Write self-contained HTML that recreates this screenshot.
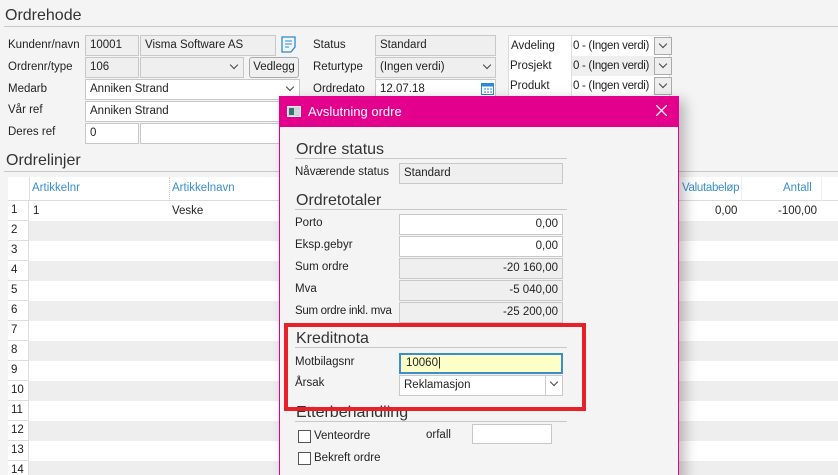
<!DOCTYPE html>
<html><head><meta charset="utf-8"><style>
*{box-sizing:border-box;margin:0;padding:0}
html,body{width:838px;height:475px;overflow:hidden}
body{background:#f4f4f4;font-family:"Liberation Sans",sans-serif;font-size:11.5px;color:#222;position:relative}
.a{position:absolute}
.h{font-size:16px;color:#333}
.ln{height:1px;background:#c8c8c8}
.f{position:absolute;border:1px solid #c8c8c8;background:#fff;padding:3px 4px;height:21px;white-space:nowrap;overflow:hidden;line-height:13px}
.g{background:#efefef}
.r{text-align:right}
.lab{position:absolute;white-space:nowrap}
.dd{position:absolute;width:18px;height:18px;border:1px solid #aaa;background:#eee}
.chev{position:absolute;width:6px;height:6px;border-right:1px solid #444;border-bottom:1px solid #444;transform:rotate(45deg)}
.row{position:absolute;left:8px;width:830px;height:20px}
.num{position:absolute;left:0;width:21px;height:20px;border-right:1px solid #ddd;border-bottom:1px solid #ddd;background:#fff;padding:3px 3px}
</style></head><body>
<div class="a h" style="left:5px;top:7px">Ordrehode</div>
<div class="a ln" style="left:4px;top:26px;width:834px"></div>

<div class="lab" style="left:8px;top:39px">Kundenr/navn</div>
<div class="f g" style="left:85px;top:35px;width:54px">10001</div>
<div class="f g" style="left:140px;top:35px;width:136px">Visma Software AS</div>
<svg class="a" style="left:281px;top:36px" width="16" height="17"><path d="M1 1h13v10l-4 5H1z" fill="none" stroke="#2a8ad4" stroke-width="1.3"/><path d="M4 5h7M4 8h7M4 11h4" stroke="#2a8ad4"/></svg>
<div class="lab" style="left:8px;top:61px">Ordrenr/type</div>
<div class="f g" style="left:85px;top:57px;width:54px">106</div>
<div class="f g" style="left:140px;top:57px;width:104px"></div>
<div class="chev" style="left:231px;top:62px"></div>
<div class="f g" style="left:249px;top:57px;width:50px;border-radius:3px;background:#f0f0f0;border-color:#aaa;text-align:center;padding:3px 1px">Vedlegg</div>
<div class="lab" style="left:8px;top:83px">Medarb</div>
<div class="f" style="left:85px;top:79px;width:215px">Anniken Strand</div>
<div class="chev" style="left:287px;top:84px"></div>
<div class="lab" style="left:8px;top:104px">Vår ref</div>
<div class="f" style="left:85px;top:101px;width:200px">Anniken Strand</div>
<div class="lab" style="left:8px;top:126px">Deres ref</div>
<div class="f" style="left:85px;top:123px;width:54px">0</div>
<div class="f" style="left:140px;top:123px;width:145px"></div>

<div class="lab" style="left:313px;top:39px">Status</div>
<div class="f g" style="left:375px;top:35px;width:121px">Standard</div>
<div class="lab" style="left:313px;top:61px">Returtype</div>
<div class="f g" style="left:375px;top:57px;width:121px">(Ingen verdi)</div>
<div class="chev" style="left:484px;top:62px"></div>
<div class="lab" style="left:313px;top:83px">Ordredato</div>
<div class="f" style="left:375px;top:79px;width:121px">12.07.18</div>
<svg class="a" style="left:481px;top:82px" width="13" height="13"><rect x="0.5" y="1.5" width="12" height="11" fill="#fff" stroke="#2a8ad4"/><rect x="0.5" y="1.5" width="12" height="3" fill="#2a8ad4"/><path d="M3 7h2M6 7h2M9 7h2M3 10h2M6 10h2M9 10h2" stroke="#2a8ad4"/></svg>

<div class="a" style="left:508px;top:35px;width:162px;height:62px;background:#fff;border:1px solid #ddd"></div>
<div class="lab" style="left:511px;top:40px">Avdeling</div>
<div class="lab" style="left:510px;top:60px">Prosjekt</div>
<div class="lab" style="left:510px;top:80px">Produkt</div>
<div class="a" style="left:571px;top:35px;width:1px;height:62px;background:#ddd"></div>
<div class="a" style="left:572px;top:56px;width:82px;height:20px;background:#efefef"></div>
<div class="lab" style="left:573px;top:40px;letter-spacing:-0.3px">0 - (Ingen verdi)</div>
<div class="lab" style="left:573px;top:60px;letter-spacing:-0.3px">0 - (Ingen verdi)</div>
<div class="lab" style="left:573px;top:80px;letter-spacing:-0.3px">0 - (Ingen verdi)</div>
<div class="dd" style="left:654px;top:37px"></div><div class="chev" style="left:660px;top:41px"></div>
<div class="dd" style="left:654px;top:57px"></div><div class="chev" style="left:660px;top:61px"></div>
<div class="dd" style="left:654px;top:77px"></div><div class="chev" style="left:660px;top:81px"></div>

<div class="a h" style="left:6px;top:152px">Ordrelinjer</div>
<div class="a ln" style="left:4px;top:171px;width:834px"></div>

<div class="a" style="left:8px;top:177px;width:830px;height:24px;background:#fff;border-bottom:1px solid #ddd"></div>
<div class="a" style="left:29px;top:177px;width:1px;height:298px;background:#ddd"></div>
<div class="a" style="left:169px;top:177px;width:0;height:298px;border-left:1px dotted #ccc"></div>
<div class="lab" style="left:32px;top:182px;color:#3a8fcf">Artikkelnr</div>
<div class="lab" style="left:172px;top:182px;color:#3a8fcf">Artikkelnavn</div>
<div class="lab" style="left:682px;top:182px;color:#3a8fcf;letter-spacing:-0.3px">Valutabeløp</div>
<div class="lab" style="left:783px;top:182px;color:#3a8fcf">Antall</div>
<div class="a" style="left:741px;top:177px;width:1px;height:298px;background:#eee"></div>
<div class="a" style="left:821px;top:177px;width:1px;height:298px;background:#eee"></div>

<div class="row" style="top:201px;background:#fff"><div class="num">1</div></div>
<div class="lab" style="left:33px;top:205px">1</div>
<div class="lab" style="left:172px;top:205px">Veske</div>
<div class="lab" style="left:715px;top:205px">0,00</div>
<div class="lab" style="left:778px;top:205px">-100,00</div>
<div class="row" style="top:221px;background:#eee"><div class="num">2</div></div>
<div class="row" style="top:241px;background:#fff"><div class="num">3</div></div>
<div class="row" style="top:261px;background:#eee"><div class="num">4</div></div>
<div class="row" style="top:281px;background:#fff"><div class="num">5</div></div>
<div class="row" style="top:301px;background:#eee"><div class="num">6</div></div>
<div class="row" style="top:321px;background:#fff"><div class="num">7</div></div>
<div class="row" style="top:341px;background:#eee"><div class="num">8</div></div>
<div class="row" style="top:361px;background:#fff"><div class="num">9</div></div>
<div class="row" style="top:381px;background:#eee"><div class="num">10</div></div>
<div class="row" style="top:401px;background:#fff"><div class="num">11</div></div>
<div class="row" style="top:421px;background:#eee"><div class="num">12</div></div>
<div class="row" style="top:441px;background:#fff"><div class="num">13</div></div>
<div class="row" style="top:461px;background:#eee"><div class="num">14</div></div>

<!-- dialog -->
<div class="a" style="left:279px;top:96px;width:400px;height:385px;background:#f4f4f4;box-shadow:6px 4px 12px rgba(0,0,0,0.25);border-left:1px solid #e0008c;border-right:1px solid #e0008c"></div>
<div class="a" style="left:279px;top:96px;width:400px;height:31px;background:#e3008c"></div>
<div class="a" style="left:287px;top:106px;width:14px;height:11px;background:#cfd8d8;border:1px solid #eee"></div>
<div class="a" style="left:289px;top:108px;width:5px;height:7px;background:#3d7070"></div>
<div class="lab" style="left:308px;top:104px;color:#fff;font-size:13px">Avslutning ordre</div>
<svg class="a" style="left:656px;top:105px" width="11" height="11"><path d="M0 0L11 11M11 0L0 11" stroke="#fff" stroke-width="1.3"/></svg>

<div class="a h" style="left:296px;top:141px">Ordre status</div>
<div class="a ln" style="left:295px;top:158px;width:272px"></div>
<div class="lab" style="left:295px;top:166px">Nåværende status</div>
<div class="f g" style="left:399px;top:163px;width:164px">Standard</div>
<div class="a h" style="left:296px;top:192px">Ordretotaler</div>
<div class="a ln" style="left:295px;top:209px;width:272px"></div>
<div class="lab" style="left:295px;top:217px">Porto</div>
<div class="f r" style="left:399px;top:214px;width:164px">0,00</div>
<div class="lab" style="left:295px;top:239px">Eksp.gebyr</div>
<div class="f r" style="left:399px;top:236px;width:164px">0,00</div>
<div class="lab" style="left:295px;top:261px">Sum ordre</div>
<div class="f g r" style="left:399px;top:258px;width:164px">-20 160,00</div>
<div class="lab" style="left:295px;top:283px">Mva</div>
<div class="f g r" style="left:399px;top:280px;width:164px">-5 040,00</div>
<div class="lab" style="left:295px;top:305px;letter-spacing:-0.3px">Sum ordre inkl. mva</div>
<div class="f g r" style="left:399px;top:302px;width:164px">-25 200,00</div>

<div class="a h" style="left:296px;top:330px">Kreditnota</div>
<div class="a ln" style="left:295px;top:347px;width:272px"></div>
<div class="lab" style="left:295px;top:356px">Motbilagsnr</div>
<div class="f" style="left:399px;top:353px;width:164px;background:#ffffc8;border:2px solid #3a8fcf;padding:2px 5px">10060|</div>
<div class="lab" style="left:295px;top:377px">Årsak</div>
<div class="f" style="left:399px;top:375px;width:164px">Reklamasjon</div>
<div class="a" style="left:545px;top:376px;width:1px;height:19px;background:#ccc"></div>
<div class="chev" style="left:551px;top:379px"></div>

<div class="a h" style="left:296px;top:404px">Etterbehandling</div>
<div class="a ln" style="left:295px;top:421px;width:272px"></div>
<div class="a" style="left:284px;top:323px;width:302px;height:88px;border:4px solid #e8202a"></div>
<div class="a" style="left:298px;top:430px;width:13px;height:13px;border:1px solid #555;background:#fff"></div>
<div class="lab" style="left:314px;top:430px">Venteordre</div>
<div class="lab" style="left:426px;top:429px">orfall</div>
<div class="f" style="left:472px;top:424px;width:80px;height:20px"></div>
<div class="a" style="left:298px;top:452px;width:13px;height:13px;border:1px solid #555;background:#fff"></div>
<div class="lab" style="left:314px;top:452px">Bekreft ordre</div>
</body></html>
